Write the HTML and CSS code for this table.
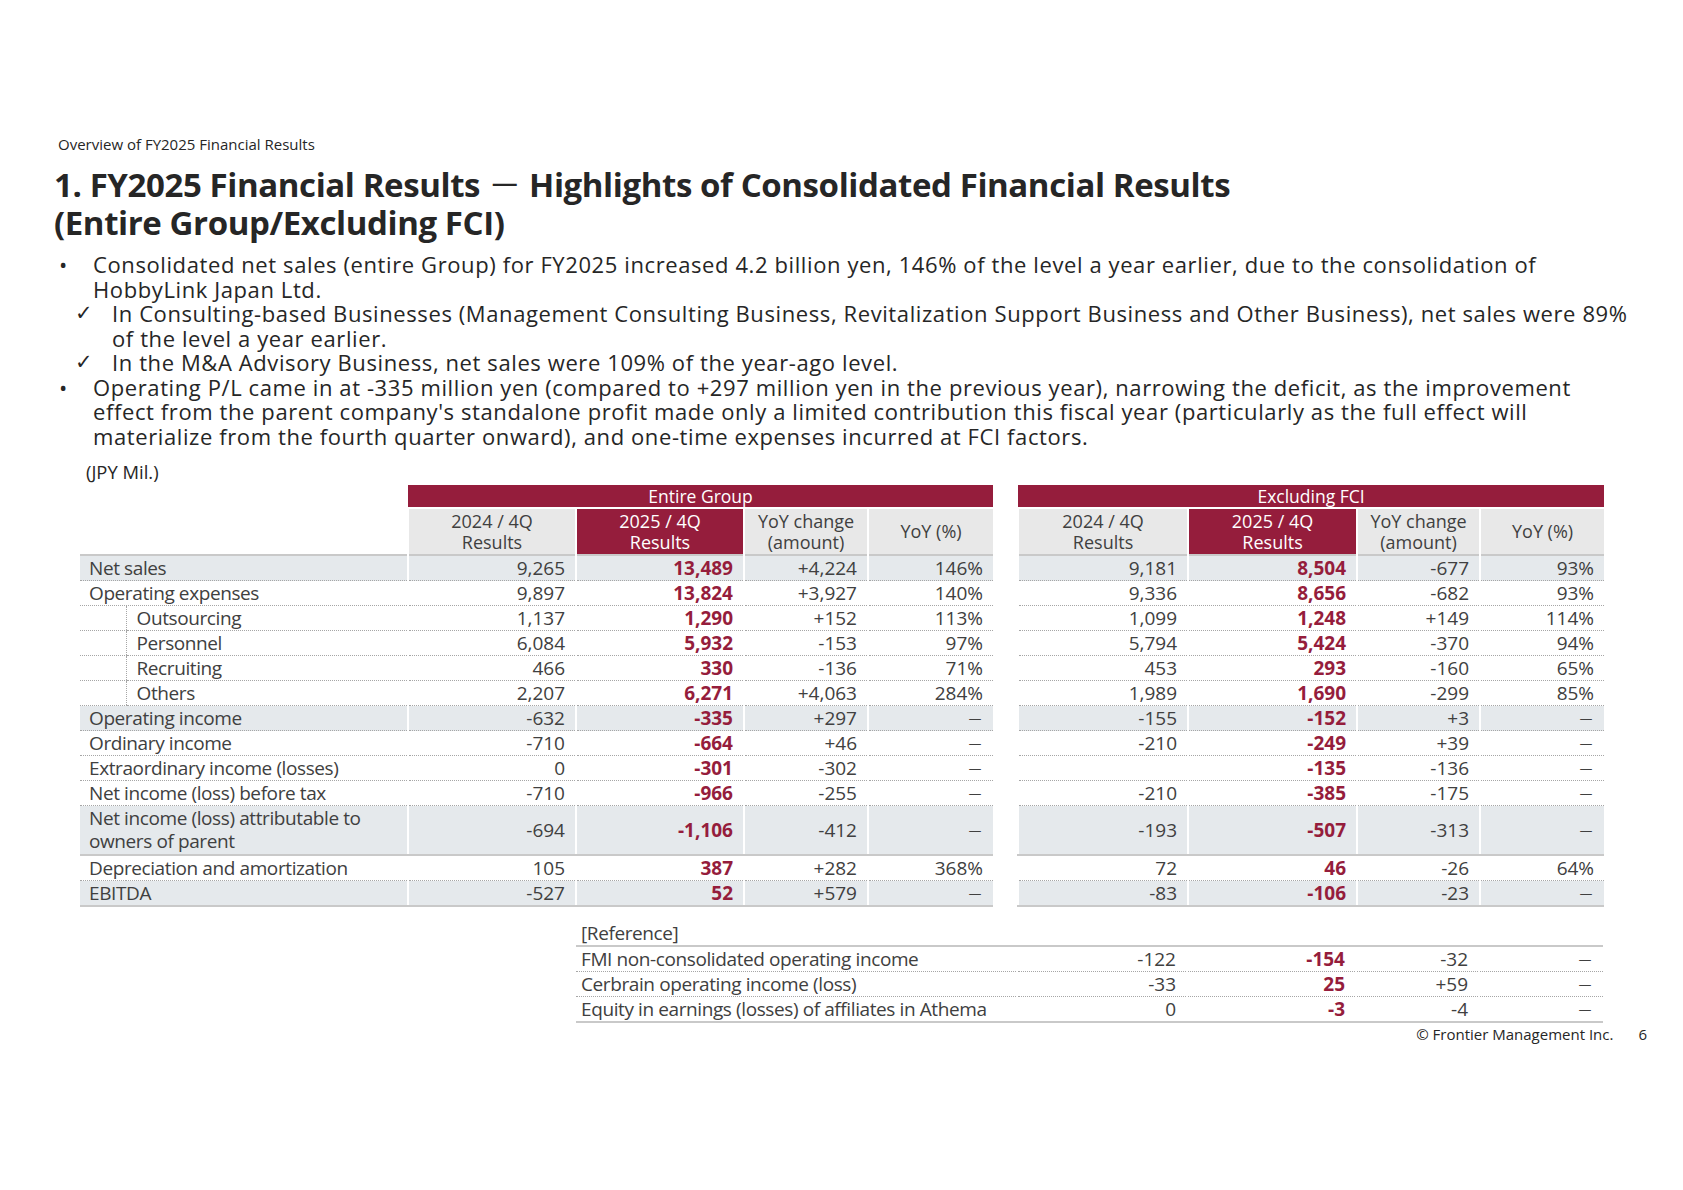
FILE: index.html
```html
<!DOCTYPE html>
<html lang="en">
<head>
    <meta charset="utf-8">
    <title>Overview of FY2025 Financial Results</title>
    <link rel="stylesheet" href="styles.css">
</head>
<body>
<div class="slide">
    <div class="section-label">Overview of FY2025 Financial Results</div>

    <h1 class="title">1. FY2025 Financial Results <span class="dash">－</span> Highlights of Consolidated Financial Results<br>(Entire Group/Excluding FCI)</h1>

    <ul class="points">
        <li class="bullet"><span class="mark">•</span><span class="txt">Consolidated net sales (entire Group) for FY2025 increased 4.2 billion yen, 146% of the level a year earlier, due to the consolidation of<br>HobbyLink Japan Ltd.</span></li>
        <li class="check"><span class="mark">✓</span><span class="txt">In Consulting-based Businesses (Management Consulting Business, Revitalization Support Business and Other Business), net sales were 89%<br>of the level a year earlier.</span></li>
        <li class="check"><span class="mark">✓</span><span class="txt">In the M&amp;A Advisory Business, net sales were 109% of the year-ago level.</span></li>
        <li class="bullet"><span class="mark">•</span><span class="txt">Operating P/L came in at -335 million yen (compared to +297 million yen in the previous year), narrowing the deficit, as the improvement<br>effect from the parent company's standalone profit made only a limited contribution this fiscal year (particularly as the full effect will<br>materialize from the fourth quarter onward), and one-time expenses incurred at FCI factors.</span></li>
    </ul>

    <div class="unit">(JPY Mil.)</div>

    <div class="tables">
        <table class="fin main">
            <colgroup>
                <col class="c-pad"><col class="c-label"><col class="c-num"><col class="c-num"><col class="c-chg"><col class="c-pct">
            </colgroup>
            <thead>
                <tr class="band"><th colspan="2" class="blank"></th><th colspan="4">Entire Group</th></tr>
                <tr class="sub"><th colspan="2" class="blank"></th><th>2024 / 4Q<br>Results</th><th class="cur">2025 / 4Q<br>Results</th><th>YoY change<br>(amount)</th><th>YoY (%)</th></tr>
            </thead>
            <tbody>
                <tr class="shade first"><td colspan="2" class="label">Net sales</td><td>9,265</td><td class="cur">13,489</td><td>+4,224</td><td>146%</td></tr>
                <tr><td colspan="2" class="label">Operating expenses</td><td>9,897</td><td class="cur">13,824</td><td>+3,927</td><td>140%</td></tr>
                <tr><td class="pad"></td><td class="label item">Outsourcing</td><td>1,137</td><td class="cur">1,290</td><td>+152</td><td>113%</td></tr>
                <tr><td class="pad"></td><td class="label item">Personnel</td><td>6,084</td><td class="cur">5,932</td><td>-153</td><td>97%</td></tr>
                <tr><td class="pad"></td><td class="label item">Recruiting</td><td>466</td><td class="cur">330</td><td>-136</td><td>71%</td></tr>
                <tr><td class="pad"></td><td class="label item">Others</td><td>2,207</td><td class="cur">6,271</td><td>+4,063</td><td>284%</td></tr>
                <tr class="shade"><td colspan="2" class="label">Operating income</td><td>-632</td><td class="cur">-335</td><td>+297</td><td class="na">－</td></tr>
                <tr><td colspan="2" class="label">Ordinary income</td><td>-710</td><td class="cur">-664</td><td>+46</td><td class="na">－</td></tr>
                <tr><td colspan="2" class="label">Extraordinary income (losses)</td><td>0</td><td class="cur">-301</td><td>-302</td><td class="na">－</td></tr>
                <tr><td colspan="2" class="label">Net income (loss) before tax</td><td>-710</td><td class="cur">-966</td><td>-255</td><td class="na">－</td></tr>
                <tr class="shade tall"><td colspan="2" class="label">Net income (loss) attributable to<br>owners of parent</td><td>-694</td><td class="cur">-1,106</td><td>-412</td><td class="na">－</td></tr>
                <tr class="split"><td colspan="2" class="label">Depreciation and amortization</td><td>105</td><td class="cur">387</td><td>+282</td><td>368%</td></tr>
                <tr class="shade last"><td colspan="2" class="label">EBITDA</td><td>-527</td><td class="cur">52</td><td>+579</td><td class="na">－</td></tr>
            </tbody>
        </table>

        <table class="fin side">
            <colgroup>
                <col class="c-num2"><col class="c-num3"><col class="c-chg2"><col class="c-pct2">
            </colgroup>
            <thead>
                <tr class="band"><th colspan="4">Excluding FCI</th></tr>
                <tr class="sub"><th>2024 / 4Q<br>Results</th><th class="cur">2025 / 4Q<br>Results</th><th>YoY change<br>(amount)</th><th>YoY (%)</th></tr>
            </thead>
            <tbody>
                <tr class="shade first"><td>9,181</td><td class="cur">8,504</td><td>-677</td><td>93%</td></tr>
                <tr><td>9,336</td><td class="cur">8,656</td><td>-682</td><td>93%</td></tr>
                <tr><td>1,099</td><td class="cur">1,248</td><td>+149</td><td>114%</td></tr>
                <tr><td>5,794</td><td class="cur">5,424</td><td>-370</td><td>94%</td></tr>
                <tr><td>453</td><td class="cur">293</td><td>-160</td><td>65%</td></tr>
                <tr><td>1,989</td><td class="cur">1,690</td><td>-299</td><td>85%</td></tr>
                <tr class="shade"><td>-155</td><td class="cur">-152</td><td>+3</td><td class="na">－</td></tr>
                <tr><td>-210</td><td class="cur">-249</td><td>+39</td><td class="na">－</td></tr>
                <tr><td></td><td class="cur">-135</td><td>-136</td><td class="na">－</td></tr>
                <tr><td>-210</td><td class="cur">-385</td><td>-175</td><td class="na">－</td></tr>
                <tr class="shade tall"><td>-193</td><td class="cur">-507</td><td>-313</td><td class="na">－</td></tr>
                <tr class="split"><td>72</td><td class="cur">46</td><td>-26</td><td>64%</td></tr>
                <tr class="shade last"><td>-83</td><td class="cur">-106</td><td>-23</td><td class="na">－</td></tr>
            </tbody>
        </table>
    </div>

    <table class="fin ref">
        <colgroup>
            <col class="c-rlabel"><col class="c-num2"><col class="c-num3"><col class="c-chg2"><col class="c-pct2">
        </colgroup>
        <tbody>
            <tr class="ref-head"><td class="label" colspan="5">[Reference]</td></tr>
            <tr><td class="label">FMI non-consolidated operating income</td><td>-122</td><td class="cur">-154</td><td>-32</td><td class="na">－</td></tr>
            <tr><td class="label">Cerbrain operating income (loss)</td><td>-33</td><td class="cur">25</td><td>+59</td><td class="na">－</td></tr>
            <tr class="last"><td class="label">Equity in earnings (losses) of affiliates in Athema</td><td>0</td><td class="cur">-3</td><td>-4</td><td class="na">－</td></tr>
        </tbody>
    </table>

    <div class="footer">
        <span class="copy">© Frontier Management Inc.</span>
        <span class="page">6</span>
    </div>
</div>
</body>
</html>
```

FILE: styles.css
```css
body {
    margin: 0;
    background: #fff;
    font-family: "Open Sans", "Noto Sans CJK JP", sans-serif;
    color: #333;
}

.slide {
    width: 1683px;
    height: 1190px;
    overflow: hidden;
}

.section-label {
    margin: 135px 0 0 58px;
    font-size: 15px;
    line-height: 18px;
    color: #262626;
}

.title {
    margin: 11px 0 0 54px;
    font-size: 33px;
    line-height: 38px;
    font-weight: 700;
    letter-spacing: -0.4px;
    color: #262626;
}

.title .dash {
    font-family: "Noto Sans CJK JP", sans-serif;
    font-weight: 400;
}

.points {
    list-style: none;
    margin: 10px 0 0 59px;
    padding: 0;
    font-size: 22px;
    line-height: 24.5px;
    letter-spacing: 0.6px;
    color: #262626;
    white-space: nowrap;
}

.points li {
    display: flex;
}

.points .mark {
    flex: none;
    width: 34px;
    letter-spacing: 0;
}

.points li.check {
    padding-left: 16px;
}

.points li.check .mark {
    width: 37px;
    font-family: "DejaVu Sans", sans-serif;
    font-size: 21px;
}

.unit {
    margin: 12px 0 0 86px;
    font-size: 18.4px;
    line-height: 24px;
    color: #262626;
}

.tables {
    display: flex;
    gap: 24px;
    margin: 1px 0 0 80px;
}

.fin {
    border-collapse: collapse;
    table-layout: fixed;
    font-size: 19px;
    color: #404040;
}

.main { width: 913px; }
.side { width: 586px; }

.c-pad { width: 46px; }
.c-label { width: 282px; }
.c-num { width: 168px; }
.c-chg { width: 124px; }
.c-pct { width: 125px; }
.c-num2 { width: 170px; }
.c-num3 { width: 169px; }
.c-chg2 { width: 123px; }
.c-pct2 { width: 124px; }
.c-rlabel { width: 441px; }

.fin th {
    font-weight: 400;
    padding: 0;
    text-align: center;
}

.fin .band th {
    height: 22px;
    line-height: 22px;
    font-size: 17.5px;
    background: #951d3c;
    color: #fff;
}

.fin .sub th {
    height: 45px;
    line-height: 21px;
    font-size: 18px;
    background: #e8e8e8;
    color: #404040;
    border-top: 2px solid #fff;
    border-left: 2px solid #fff;
}

.fin .sub th.cur {
    background: #951d3c;
    color: #fff;
}

.fin th.blank,
.fin .sub th.blank {
    background: #fff;
    border: none;
}

.fin td {
    height: 24px;
    line-height: 23px;
    padding: 0 10px 0 0;
    text-align: right;
    white-space: nowrap;
    border-bottom: 1px dotted #a6a6a6;
    border-left: 2px solid #fff;
}

.fin td.label {
    text-align: left;
    padding-left: 9px;
    border-left: none;
    letter-spacing: -0.4px;
}

.fin td.pad {
    border-left: none;
    padding: 0;
}

.fin td.item {
    border-left: 1px dotted #a6a6a6;
    padding-left: 10px;
}

.fin td.cur {
    color: #951d3c;
    font-weight: 700;
}

.fin td.na {
    font-family: "Noto Sans CJK JP", sans-serif;
    font-size: 16px;
}

.fin tr.shade td {
    background: #e5e9ec;
}

.fin tr.first td {
    border-top: 2px solid #c9c9c9;
}

.fin tr.tall td {
    height: 48px;
    line-height: 23px;
    border-bottom: 2px solid #c9c9c9;
}

.fin tr.last td {
    border-bottom: 2px solid #c9c9c9;
}

.ref {
    width: 1027px;
    margin: 14px 0 0 576px;
}

.ref td.label {
    padding-left: 5px;
}

.ref tr.ref-head td {
    border-bottom: 2px solid #c9c9c9;
}

.footer {
    display: flex;
    justify-content: flex-end;
    align-items: center;
    gap: 25px;
    margin-top: 2px;
    padding-right: 36px;
    font-size: 15px;
    line-height: 18px;
    color: #262626;
}
```
